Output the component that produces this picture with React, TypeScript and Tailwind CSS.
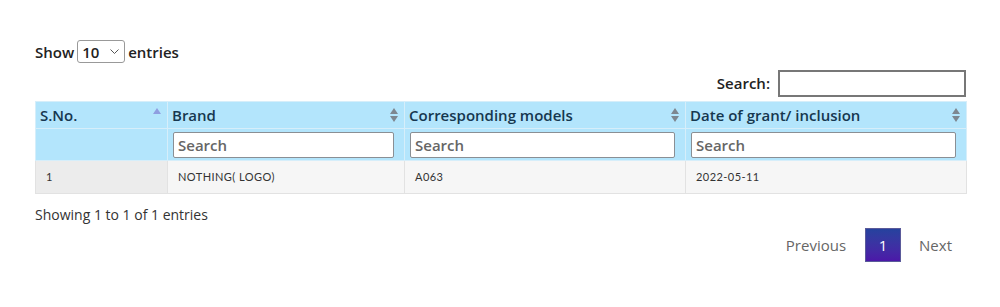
import React, { useState } from 'react';

type Row = { sno: number; brand: string; models: string; date: string };

const ROWS: Row[] = [{ sno: 1, brand: 'NOTHING( LOGO)', models: 'A063', date: '2022-05-11' }];

const SortBoth = () => (
  <svg width="8" height="14" viewBox="0 0 8 14" className="shrink-0">
    <path d="M4 0 L8 6 H0 Z" fill="#7d8790" />
    <path d="M4 14 L8 8 H0 Z" fill="#7d8790" />
  </svg>
);

const SortAsc = () => (
  <svg width="8" height="14" viewBox="0 0 8 14" className="shrink-0">
    <path d="M4 0 L8 6 H0 Z" fill="#8f9ee0" />
  </svg>
);

const sans = "font-['Open_Sans',sans-serif]";
const cellFont = "font-['Lato','DejaVu_Sans',sans-serif]";

const App: React.FC = () => {
  const [pageSize, setPageSize] = useState('10');

  return (
    <div className={`w-[1000px] h-[307px] bg-white pt-[40px] px-[35px] ${sans} text-[#222]`}>
      <div className="flex items-center gap-[3px] text-[15px] font-semibold h-[24px]">
        <span>Show</span>
        <div className="relative">
          <select
            value={pageSize}
            onChange={e => setPageSize(e.target.value)}
            className="appearance-none h-[23px] w-[48px] border border-[#999] rounded-[3px] pl-[4px] text-[15px] font-semibold bg-white outline-none"
          >
            <option>10</option>
            <option>25</option>
            <option>50</option>
            <option>100</option>
          </select>
          {/* chevron over the native select */}
          <svg width="9" height="6" viewBox="0 0 9 6" className="absolute right-[6px] top-[9px] pointer-events-none">
            <path d="M0.5 0.5 L4.5 4.5 L8.5 0.5" fill="none" stroke="#555" strokeWidth="1" />
          </svg>
        </div>
        <span>entries</span>
      </div>

      <div className="flex justify-end items-center gap-[8px] mt-[5px] h-[28px] -mr-[1px]">
        <span className="text-[15px] font-semibold">Search:</span>
        <input className="w-[188px] h-[27px] border-2 border-[#777] outline-none" />
      </div>

      <table className="w-[931px] mt-[4px] border-collapse text-left table-fixed">
        <colgroup>
          <col className="w-[132px]" />
          <col className="w-[237px]" />
          <col className="w-[281px]" />
          <col className="w-[281px]" />
        </colgroup>
        <thead>
          <tr className="bg-[#b3e5fc] h-[27px] text-[#16374f] text-[15px] font-semibold">
            <th className="border border-[#d6eefa] pl-[4px] pr-[6px] font-semibold">
              <div className="flex items-center justify-between">
                <span>S.No.</span>
                <SortAsc />
              </div>
            </th>
            {['Brand', 'Corresponding models', 'Date of grant/ inclusion'].map(h => (
              <th key={h} className="border border-[#d6eefa] pl-[4px] pr-[6px] font-semibold">
                <div className="flex items-center justify-between">
                  <span>{h}</span>
                  <SortBoth />
                </div>
              </th>
            ))}
          </tr>
          <tr className="bg-[#b3e5fc] h-[32px]">
            <td className="border border-[#d6eefa]" />
            {[0, 1, 2].map(i => (
              <td key={i} className="border border-[#d6eefa] pl-[5px] pr-[10px]">
                <input
                  placeholder="Search"
                  className="w-full h-[26px] bg-white border border-[#8a8f94] rounded-[2px] px-[4px] text-[15px] font-semibold placeholder:text-[#666] outline-none"
                />
              </td>
            ))}
          </tr>
        </thead>
        <tbody>
          {ROWS.map(r => (
            <tr key={r.sno} className={`h-[33px] text-[11px] tracking-[0.04em] text-[#333] ${cellFont}`}>
              <td className="bg-[#ececec] border border-[#e2e2e2] pl-[10px]">{r.sno}</td>
              <td className="bg-[#f6f6f6] border border-[#e2e2e2] pl-[10px]">{r.brand}</td>
              <td className="bg-[#f6f6f6] border border-[#e2e2e2] pl-[10px]">{r.models}</td>
              <td className="bg-[#f6f6f6] border border-[#e2e2e2] pl-[10px]">{r.date}</td>
            </tr>
          ))}
        </tbody>
      </table>

      <div className="mt-[10px] text-[14px] text-[#333] h-[20px]">Showing 1 to 1 of 1 entries</div>

      <div className="flex justify-end items-center mt-[4px] mr-[13px] text-[15px] text-[#666]">
        <span className="mr-[19px]">Previous</span>
        <span className="w-[36px] h-[34px] flex items-center justify-center text-white bg-gradient-to-b from-[#25429e] to-[#4b17a8] border border-[#5a5a9a]">
          1
        </span>
        <span className="ml-[18px]">Next</span>
      </div>
    </div>
  );
};

export default App;
